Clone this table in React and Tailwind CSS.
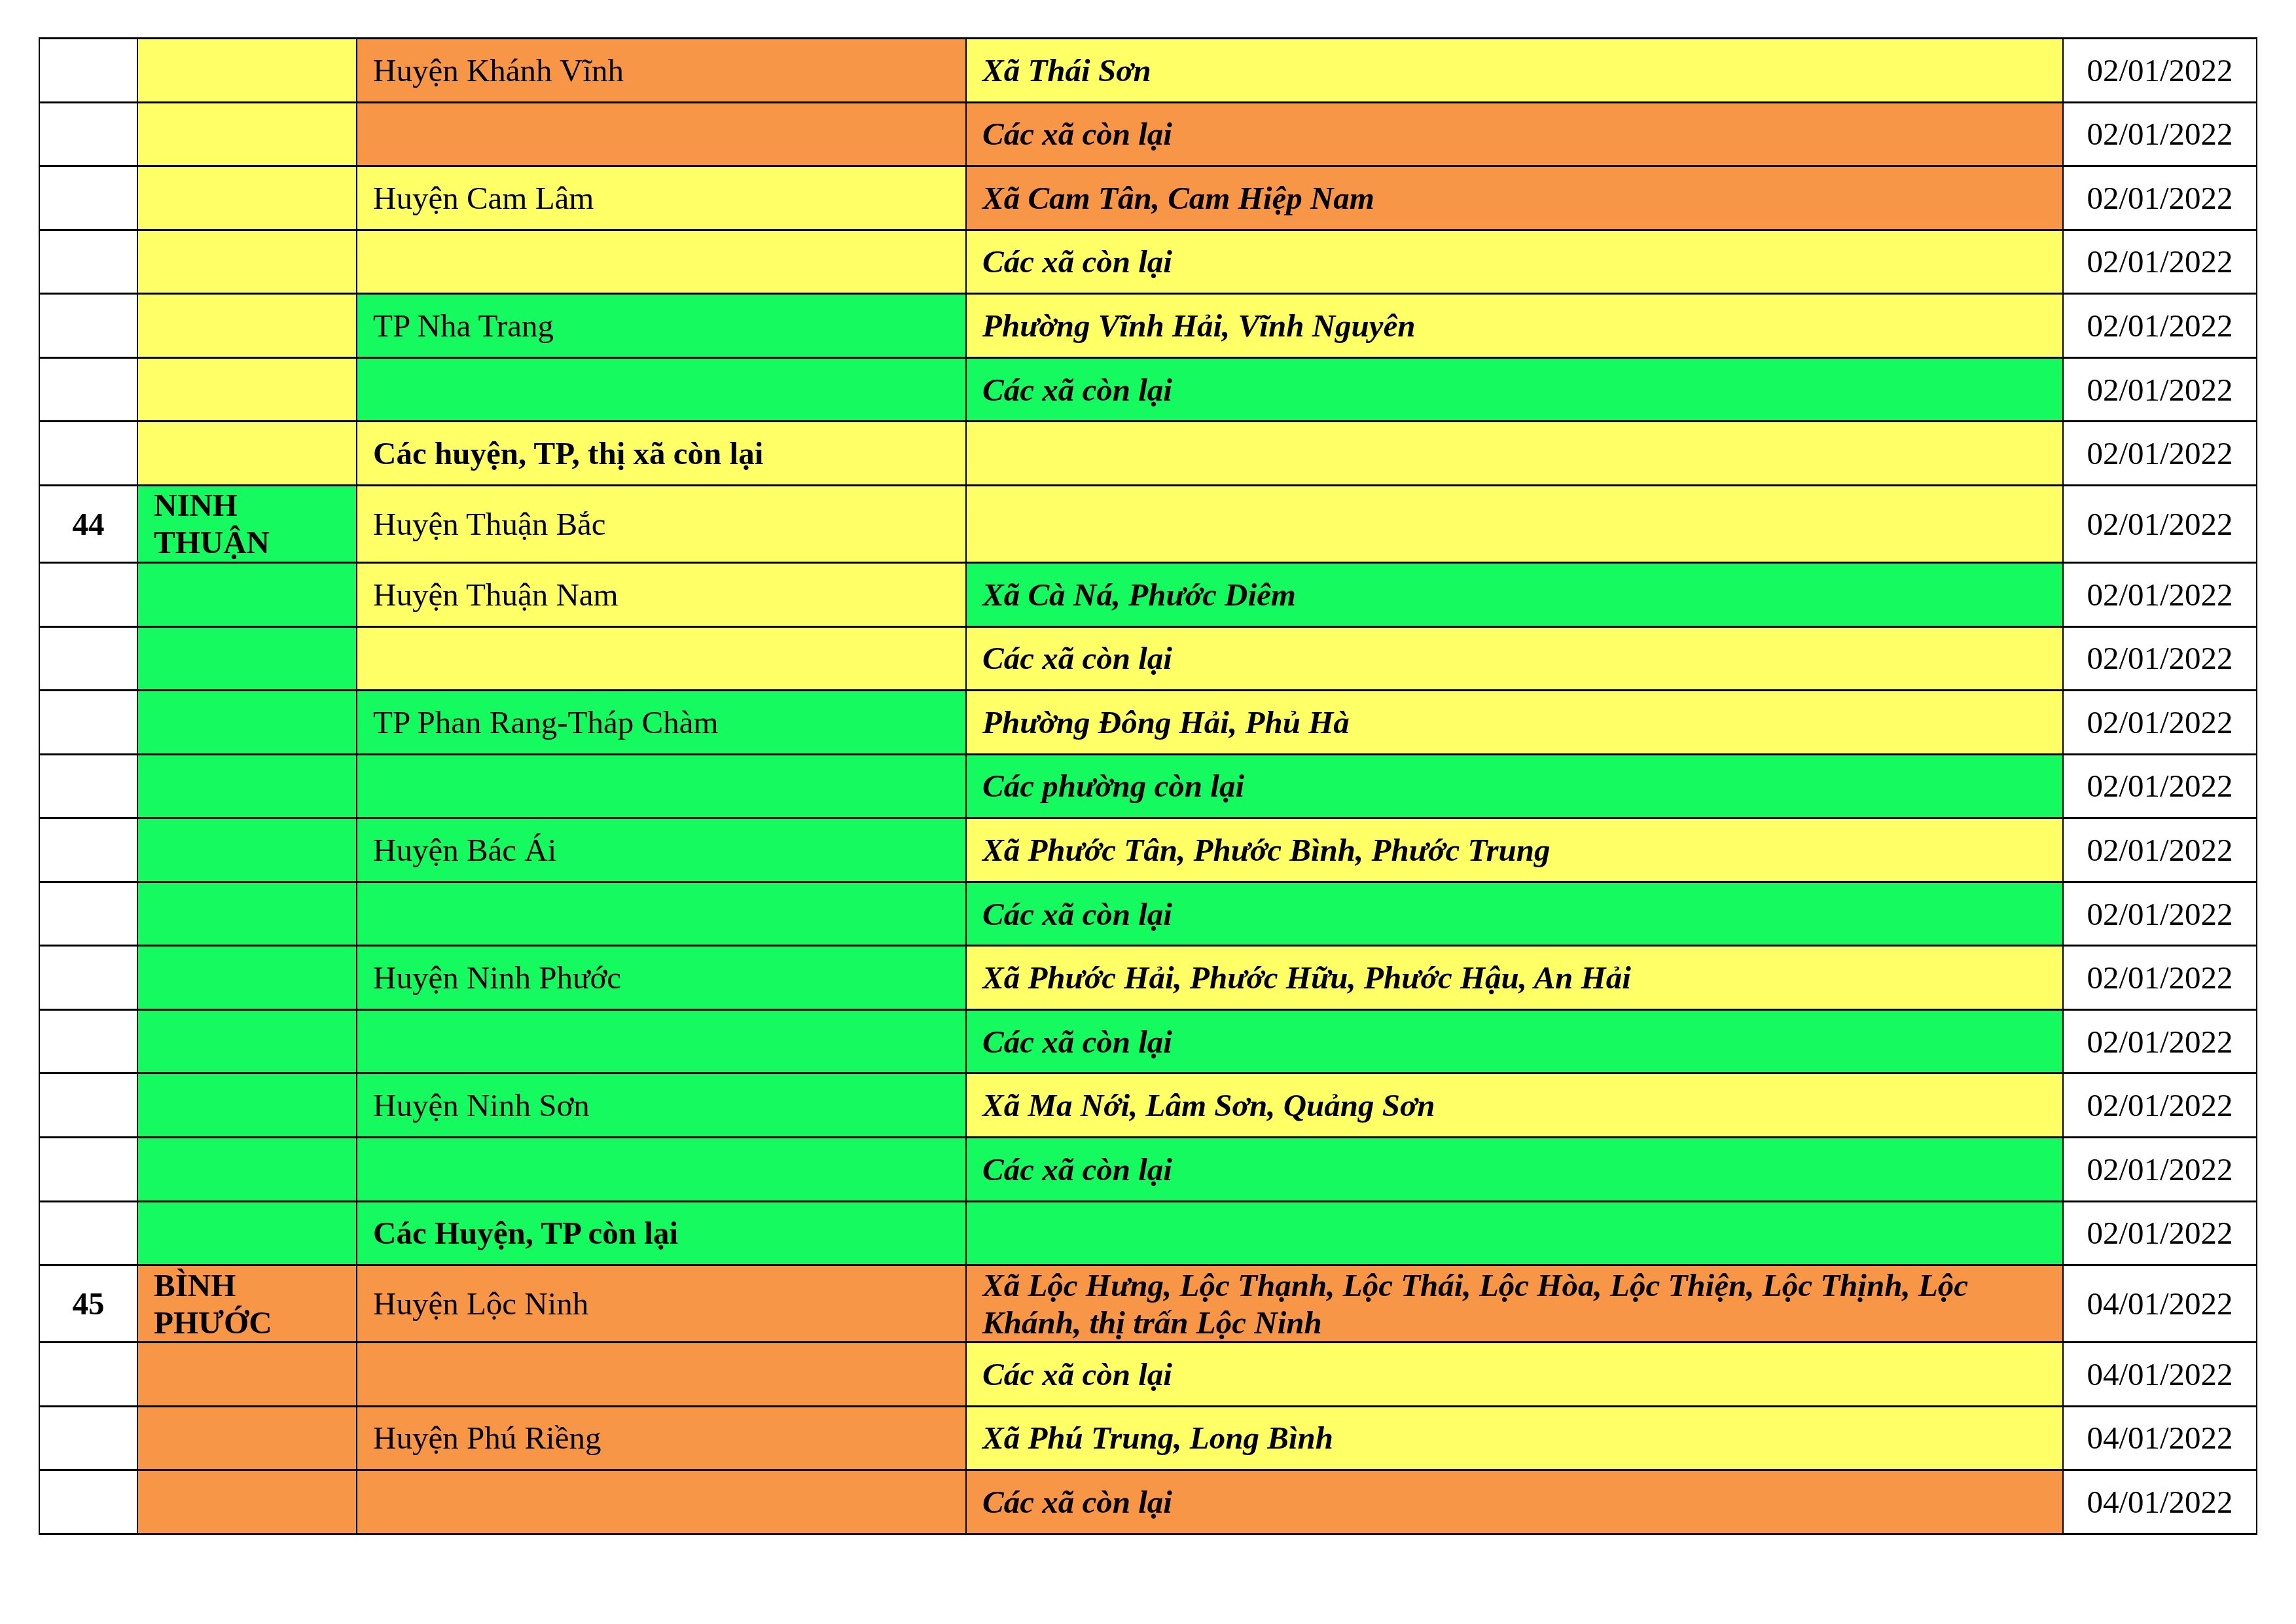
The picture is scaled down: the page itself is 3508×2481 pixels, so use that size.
import React from "react";

const Y = "bg-[#ffff66]";
const O = "bg-[#f79646]";
const G = "bg-[#14fa5f]";

const D1 = "02/01/2022";
const D2 = "04/01/2022";

const rows = [
  { pc: Y, d: "Huyện Khánh Vĩnh", dc: O, c: "Xã Thái Sơn", cc: Y, date: D1 },
  { pc: Y, d: "", dc: O, c: "Các xã còn lại", cc: O, date: D1 },
  { pc: Y, d: "Huyện Cam Lâm", dc: Y, c: "Xã Cam Tân, Cam Hiệp Nam", cc: O, date: D1 },
  { pc: Y, d: "", dc: Y, c: "Các xã còn lại", cc: Y, date: D1 },
  { pc: Y, d: "TP Nha Trang", dc: G, c: "Phường Vĩnh Hải, Vĩnh Nguyên", cc: Y, date: D1 },
  { pc: Y, d: "", dc: G, c: "Các xã còn lại", cc: G, date: D1 },
  { pc: Y, d: "Các huyện, TP, thị xã còn lại", db: true, dc: Y, c: "", cc: Y, date: D1 },
  { no: "44", p: ["NINH", "THUẬN"], pc: G, d: "Huyện Thuận Bắc", dc: Y, c: "", cc: Y, date: D1, tall: true },
  { pc: G, d: "Huyện Thuận Nam", dc: Y, c: "Xã Cà Ná, Phước Diêm", cc: G, date: D1 },
  { pc: G, d: "", dc: Y, c: "Các xã còn lại", cc: Y, date: D1 },
  { pc: G, d: "TP Phan Rang-Tháp Chàm", dc: G, c: "Phường Đông Hải, Phủ Hà", cc: Y, date: D1 },
  { pc: G, d: "", dc: G, c: "Các phường còn lại", cc: G, date: D1 },
  { pc: G, d: "Huyện Bác Ái", dc: G, c: "Xã Phước Tân, Phước Bình, Phước Trung", cc: Y, date: D1 },
  { pc: G, d: "", dc: G, c: "Các xã còn lại", cc: G, date: D1 },
  { pc: G, d: "Huyện Ninh Phước", dc: G, c: "Xã Phước Hải, Phước Hữu, Phước Hậu, An Hải", cc: Y, date: D1 },
  { pc: G, d: "", dc: G, c: "Các xã còn lại", cc: G, date: D1 },
  { pc: G, d: "Huyện Ninh Sơn", dc: G, c: "Xã Ma Nới, Lâm Sơn, Quảng Sơn", cc: Y, date: D1 },
  { pc: G, d: "", dc: G, c: "Các xã còn lại", cc: G, date: D1 },
  { pc: G, d: "Các Huyện, TP còn lại", db: true, dc: G, c: "", cc: G, date: D1 },
  {
    no: "45",
    p: ["BÌNH", "PHƯỚC"],
    pc: O,
    d: "Huyện Lộc Ninh",
    dc: O,
    c: "Xã Lộc Hưng, Lộc Thạnh, Lộc Thái, Lộc Hòa, Lộc Thiện, Lộc Thịnh, Lộc Khánh, thị trấn Lộc Ninh",
    cc: O,
    date: D2,
    tall: true,
  },
  { pc: O, d: "", dc: O, c: "Các xã còn lại", cc: Y, date: D2 },
  { pc: O, d: "Huyện Phú Riềng", dc: O, c: "Xã Phú Trung, Long Bình", cc: Y, date: D2 },
  { pc: O, d: "", dc: O, c: "Các xã còn lại", cc: O, date: D2 },
];

function Row({ r }) {
  return (
    <div
      className={`flex border-b-[3px] border-black ${
        r.tall ? "h-[118px]" : "h-[97.57px]"
      }`}
    >
      <div className="w-[150px] shrink-0 border-r-2 border-black bg-white flex items-center justify-center font-bold">
        {r.no || ""}
      </div>
      <div
        className={`w-[335px] shrink-0 border-r-2 border-black flex flex-col justify-center pl-6 font-bold ${r.pc}`}
      >
        {r.p ? r.p.map((t) => <div key={t}>{t}</div>) : null}
      </div>
      <div
        className={`w-[931px] shrink-0 border-r-2 border-black flex items-center pl-6 ${
          r.db ? "font-bold" : ""
        } ${r.dc}`}
      >
        {r.d}
      </div>
      <div
        className={`w-[1676px] shrink-0 border-r-2 border-black flex items-center pl-6 pr-4 font-bold italic ${r.cc}`}
      >
        <div>{r.c}</div>
      </div>
      <div className="w-[294px] shrink-0 bg-white flex items-center justify-center">
        {r.date}
      </div>
    </div>
  );
}

export default function App() {
  return (
    <div className="bg-white w-[3508px] h-[2481px] pt-[57px] pl-[59px] font-['Liberation_Serif','Times_New_Roman',serif] text-[49px] leading-[57px] text-black">
      <div className="w-[3390px] border-t-[3px] border-l-2 border-r-2 border-black">
        {rows.map((r, i) => (
          <Row key={i} r={r} />
        ))}
      </div>
    </div>
  );
}
